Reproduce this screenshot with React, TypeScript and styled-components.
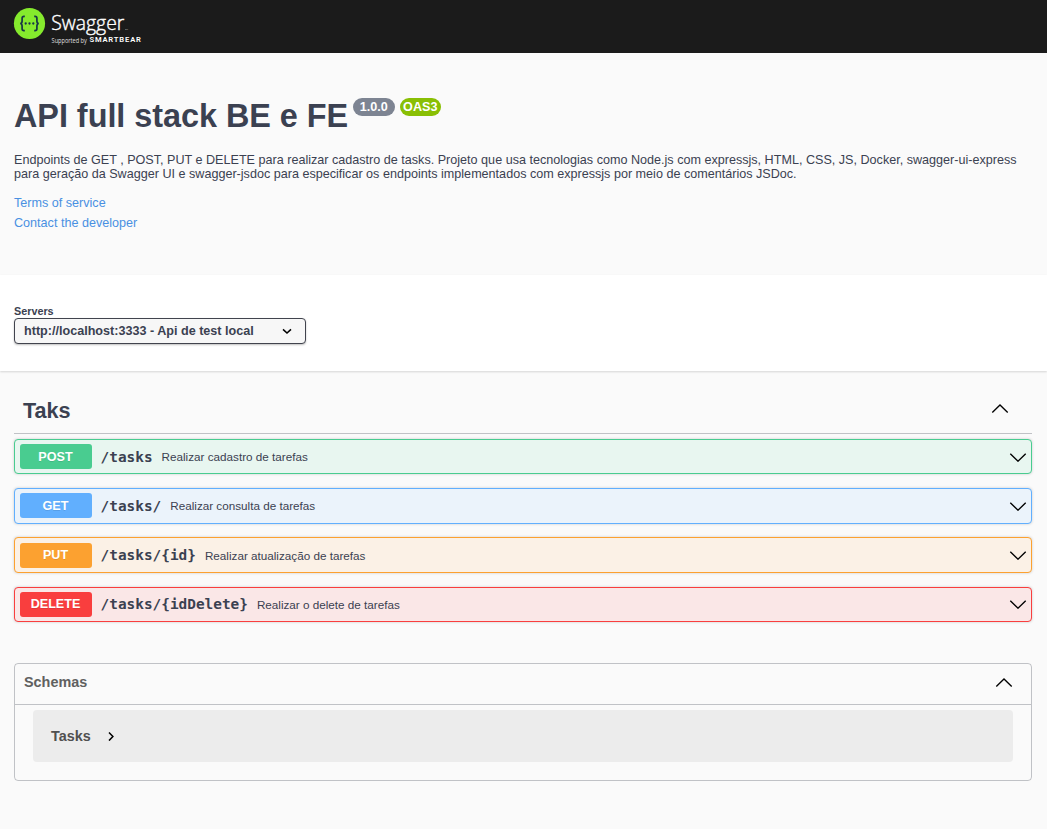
import React from "react";
import styled, { createGlobalStyle } from "styled-components";

const GlobalStyle = createGlobalStyle`
  *, *::before, *::after { box-sizing: border-box; }
  body {
    margin: 0;
    background: #fafafa;
    color: #3b4151;
    font-family: "Liberation Sans", Arial, sans-serif;
  }
`;

const Page = styled.div`
  min-height: 829px;
  background: #fafafa;
`;

const TopBar = styled.header`
  height: 53px;
  padding: 7px 13px;
  background: #1b1b1b;
`;

const Logo = styled.svg`
  display: block;
`;

const Info = styled.section`
  height: 222px;
  padding: 43px 15px 0 14px;
`;

const TitleRow = styled.div`
  display: flex;
  align-items: flex-start;
`;

const Title = styled.h1`
  margin: 0;
  padding-top: 1px;
  font-size: 32.4px;
  line-height: 38px;
  font-weight: 700;
  letter-spacing: -0.03px;
  white-space: nowrap;
`;

const Badge = styled.span<{ $color: string; $width: number; $gap: number }>`
  width: ${(p) => p.$width}px;
  height: 18px;
  margin: 2px 0 0 ${(p) => p.$gap}px;
  border-radius: 9px;
  background: ${(p) => p.$color};
  color: #fff;
  font-size: 12.6px;
  line-height: 18px;
  font-weight: 700;
  text-align: center;
`;

const Description = styled.p`
  margin: 18px 0 15px;
  font-size: 12.6px;
  line-height: 14px;
`;

const InfoLink = styled.a`
  display: block;
  width: max-content;
  margin-bottom: 6px;
  color: #4990e2;
  font-size: 12.6px;
  line-height: 14px;
  text-decoration: none;
`;

const ServerBar = styled.section`
  height: 96px;
  padding: 30px 14px 0;
  background: #fff;
  box-shadow: 0 1px 2px rgba(0, 0, 0, 0.15);
`;

const ServerLabel = styled.div`
  height: 13px;
  font-size: 10.8px;
  line-height: 13px;
  font-weight: 700;
`;

const ServerSelect = styled.button`
  display: flex;
  align-items: center;
  justify-content: space-between;
  width: 292px;
  height: 26px;
  padding: 0 13px 0 9px;
  border: 1px solid #41444e;
  border-radius: 4px;
  background: #f7f7f7;
  box-shadow: 0 1px 2px rgba(0, 0, 0, 0.25);
  color: #3b4151;
  font: 700 12.6px "Liberation Sans", Arial, sans-serif;
`;

const Operations = styled.main`
  padding: 18px 15px 0 14px;
`;

const TagHeader = styled.div`
  display: flex;
  align-items: flex-start;
  justify-content: space-between;
  height: 45px;
  margin-bottom: 5px;
  padding: 9px 23px 0 9px;
  border-bottom: 1px solid rgba(59, 65, 81, 0.3);
`;

const TagTitle = styled.h3`
  margin: 0;
  font-size: 21.6px;
  line-height: 25px;
`;

const TagToggle = styled.span`
  display: flex;
  padding-top: 6px;
`;

const Operation = styled.div<{ $color: string; $tint: string }>`
  display: flex;
  align-items: center;
  height: 35.45px;
  margin-bottom: 13.75px;
  padding: 0.65px 4px 0 5px;
  border: 1px solid ${(p) => p.$color};
  border-radius: 4px;
  background: ${(p) => p.$tint};
  box-shadow: 0 0 3px rgba(0, 0, 0, 0.19);
`;

const Method = styled.span<{ $color: string }>`
  align-self: flex-start;
  width: 72px;
  height: 25px;
  margin-top: 3.5px;
  padding: 0.45px 1px 0 0;
  border-radius: 3px;
  background: ${(p) => p.$color};
  color: #fff;
  font-size: 12.6px;
  line-height: 25px;
  font-weight: 700;
  text-align: center;
  text-shadow: 0 1px 0 rgba(0, 0, 0, 0.1);
`;

const Path = styled.span`
  margin-left: 8.6px;
  font-family: "DejaVu Sans Mono", monospace;
  font-size: 14.4px;
  line-height: 17px;
  font-weight: 700;
`;

const Summary = styled.span`
  flex: 1;
  margin-left: 9px;
  padding-top: 0.5px;
  font-size: 11.7px;
  line-height: 14px;
`;

const Schemas = styled.section`
  height: 118px;
  margin-top: 41px;
  border: 1px solid rgba(59, 65, 81, 0.3);
  border-radius: 4px;
`;

const SchemasHeader = styled.div`
  display: flex;
  align-items: center;
  justify-content: space-between;
  height: 41px;
  padding: 0 18px 3px 9px;
  border-bottom: 1px solid rgba(59, 65, 81, 0.3);
`;

const SchemasTitle = styled.h4`
  margin: 0;
  color: #606060;
  font-size: 14.4px;
  line-height: 17px;
`;

const Model = styled.div`
  display: flex;
  align-items: center;
  gap: 16px;
  height: 52px;
  margin: 5px 18px 0;
  padding: 0 18px;
  border-radius: 4px;
  background: #ececec;
  color: #505050;
  font-size: 14.4px;
  font-weight: 700;
`;

type Direction = "up" | "down";

const ARROW: Record<Direction, string> = {
  up: "M1.3 8.4 9 1l7.7 7.4",
  down: "M1.3.8 9 8.2 16.7.8",
};

const Arrow = ({ direction }: { direction: Direction }) => (
  <svg width="18" height="9" viewBox="0 0 18 9" fill="none" stroke="#000" strokeWidth="1.35">
    <path d={ARROW[direction]} />
  </svg>
);

const SmallArrow = ({ turned = false }: { turned?: boolean }) => (
  <svg width={turned ? 8 : 10} height={turned ? 10 : 8} viewBox={turned ? "0 0 8 10" : "0 0 10 8"} fill="none" stroke="#000" strokeWidth="1.5">
    <path d={turned ? "M2 1.6 5.9 5.6 2 9.6" : "M1 2.4 5 6.1 9 2.4"} />
  </svg>
);

const SwaggerLogo = () => (
  <Logo width="130" height="40" viewBox="13 7 130 40" role="img" aria-label="Swagger">
    <circle cx="29.5" cy="23.5" r="15.6" fill="#85ea2d" />
    <g fill="none" stroke="#173647" strokeWidth="1.7">
      <path d="M24.8 16.4h-.8c-1.3 0-1.9.7-1.9 1.9v2.7c0 1.6-.5 2.4-1.9 2.5 1.4.1 1.9.9 1.9 2.5v2.7c0 1.2.6 1.9 1.9 1.9h.8" />
      <path d="M34.2 16.4h.8c1.3 0 1.9.7 1.9 1.9v2.7c0 1.6.5 2.4 1.9 2.5-1.4.1-1.9.9-1.9 2.5v2.7c0 1.2-.6 1.9-1.9 1.9h-.8" />
    </g>
    <g fill="#173647">
      <circle cx="25.7" cy="23.5" r="1.15" />
      <circle cx="29.5" cy="23.5" r="1.15" />
      <circle cx="33.3" cy="23.5" r="1.15" />
    </g>
    <g fill="#fff">
      <text x="51.3" y="30" fontFamily="Open Sans, sans-serif" fontSize="20" fontWeight="300" stroke="#fff" strokeWidth="0.4" textLength="73" lengthAdjust="spacingAndGlyphs">Swagger</text>
      <text x="125" y="29.5" fontFamily="Open Sans, sans-serif" fontSize="2" opacity="0.8">TM</text>
      <text x="51.6" y="42.5" fontFamily="Open Sans, sans-serif" fontSize="6.2" textLength="35.2" lengthAdjust="spacingAndGlyphs" opacity="0.85">Supported by</text>
      <text x="89.4" y="42.3" fontFamily="Roboto, sans-serif" fontSize="7.6" fontWeight="600" textLength="51.5" lengthAdjust="spacing">SMARTBEAR</text>
    </g>
  </Logo>
);

const operations = [
  { method: "POST", path: "/tasks", summary: "Realizar cadastro de tarefas", color: "#49cc90", tint: "#e8f6f0" },
  { method: "GET", path: "/tasks/", summary: "Realizar consulta de tarefas", color: "#61affe", tint: "#ebf3fb" },
  { method: "PUT", path: "/tasks/{id}", summary: "Realizar atualização de tarefas", color: "#fca130", tint: "#fbf1e6" },
  { method: "DELETE", path: "/tasks/{idDelete}", summary: "Realizar o delete de tarefas", color: "#f93e3e", tint: "#fae7e7" },
];

export default function App() {
  return (
    <Page>
      <GlobalStyle />
      <TopBar>
        <SwaggerLogo />
      </TopBar>
      <Info>
        <TitleRow>
          <Title>API full stack BE e FE</Title>
          <Badge $color="#7d8492" $width={42} $gap={4.6}>1.0.0</Badge>
          <Badge $color="#89bf04" $width={41} $gap={5}>OAS3</Badge>
        </TitleRow>
        <Description>
          Endpoints de GET , POST, PUT e DELETE para realizar cadastro de tasks. Projeto que usa tecnologias como
          Node.js com expressjs, HTML, CSS, JS, Docker, swagger-ui-express para geração da Swagger UI e swagger-jsdoc
          para especificar os endpoints implementados com expressjs por meio de comentários JSDoc.
        </Description>
        <InfoLink>Terms of service</InfoLink>
        <InfoLink>Contact the developer</InfoLink>
      </Info>
      <ServerBar>
        <ServerLabel>Servers</ServerLabel>
        <ServerSelect>
          http://localhost:3333 - Api de test local
          <SmallArrow />
        </ServerSelect>
      </ServerBar>
      <Operations>
        <TagHeader>
          <TagTitle>Taks</TagTitle>
          <TagToggle>
            <Arrow direction="up" />
          </TagToggle>
        </TagHeader>
        {operations.map((op) => (
          <Operation key={op.method} $color={op.color} $tint={op.tint}>
            <Method $color={op.color}>{op.method}</Method>
            <Path>{op.path}</Path>
            <Summary>{op.summary}</Summary>
            <Arrow direction="down" />
          </Operation>
        ))}
        <Schemas>
          <SchemasHeader>
            <SchemasTitle>Schemas</SchemasTitle>
            <Arrow direction="up" />
          </SchemasHeader>
          <Model>
            Tasks
            <SmallArrow turned />
          </Model>
        </Schemas>
      </Operations>
    </Page>
  );
}
